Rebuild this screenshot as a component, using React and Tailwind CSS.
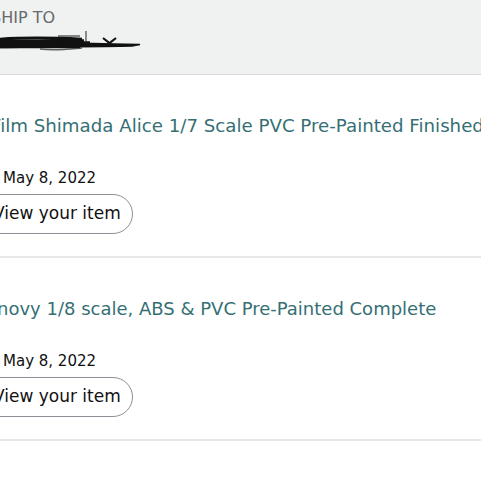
export default function App() {
  const font = { fontFamily: '"DejaVu Sans", Verdana, sans-serif' };
  return (
    <div className="w-[481px] h-[481px] overflow-hidden bg-white" style={font}>
      <div className="h-[75px] bg-[#f0f2f2] border-b border-[#d5d9d9] pt-[8px]">
        <div className="text-[16px] leading-[20px] text-[#666a6a] ml-[-9px] whitespace-nowrap">SHIP TO</div>
        <div className="h-[24px] mt-[2px]">
          <svg width="150" height="24" viewBox="0 0 150 24" className="block">
            <path d="M0 9 C30 7 60 8 82 9 M0 11 L84 10.5 M0 13 L90 12.5 M0 15 L92 14.5 M0 17 L80 17" stroke="#111" strokeWidth="2.6" fill="none" />
            <path d="M0 14 C40 12 80 13 140 14.5 L132 16 C90 17 50 16.5 0 17.5 Z" stroke="#111" strokeWidth="1.4" fill="#111" />
            <path d="M58 6 L80 6 M86 1 L86 13 M40 19 C55 21 70 19 82 18" stroke="#222" strokeWidth="1.4" fill="none" opacity="0.7" />
            <path d="M103 8 L109.5 13 L116 8" stroke="#111" strokeWidth="2.2" fill="none" />
          </svg>
        </div>
      </div>
      {[
        { title: "Film Shimada Alice 1/7 Scale PVC Pre-Painted Finished", cls: "ml-[-9px] text-[18.2px]" },
        { title: "novy 1/8 scale, ABS & PVC Pre-Painted Complete", cls: "ml-[-3px] text-[18px]" },
      ].map((it, i) => (
        <div key={i} className="border-b-2 border-[#e7e7e7] h-[183px] pt-[39px]">
          <div className={`leading-[24px] text-[#356f74] whitespace-nowrap ${it.cls}`}>{it.title}</div>
          <div className="mt-[30px] text-[15px] leading-[20px] text-[#111] ml-[3px] whitespace-nowrap">May 8, 2022</div>
          <div className="mt-[6px] ml-[-20px] w-[153px] h-[40px] rounded-full border border-[#8d9096] flex items-center pl-[12px] text-[17px] text-[#111] whitespace-nowrap">
            View your item
          </div>
        </div>
      ))}
    </div>
  );
}
